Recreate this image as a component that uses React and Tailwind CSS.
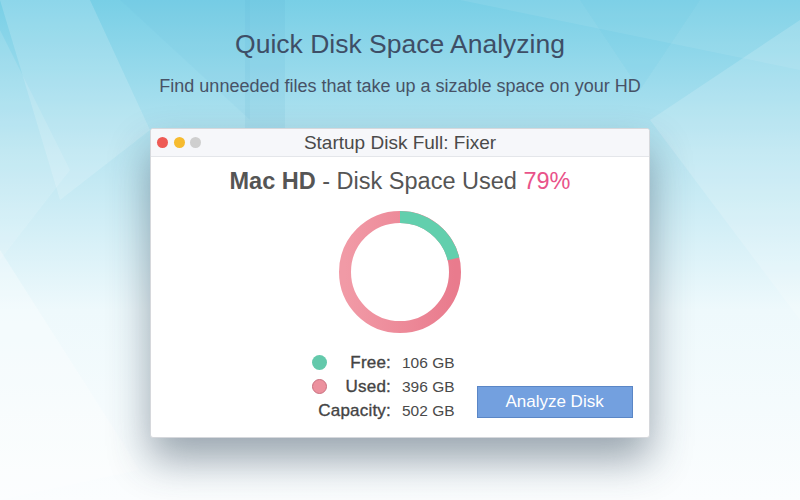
import React from 'react'

const FONT = { fontFamily: '"Liberation Sans", Arial, sans-serif' }

// donut geometry
const R = 55
const C = 2 * Math.PI * R
const FREE = 106 / 502

function Backdrop() {
  // faint triangular facets behind the page
  return (
    <svg className="absolute inset-0 w-full h-full" viewBox="0 0 800 500" preserveAspectRatio="none">
      <defs>
        <linearGradient id="bg" x1="0" y1="0" x2="0" y2="1">
          <stop offset="0" stopColor="#78cfe6" />
          <stop offset="0.3" stopColor="#b9e5f1" />
          <stop offset="0.62" stopColor="#eef9fc" />
          <stop offset="1" stopColor="#fbfdfe" />
        </linearGradient>
      </defs>
      <rect width="800" height="500" fill="url(#bg)" />
      <polygon points="0,0 90,0 150,130 60,200" fill="#ffffff" opacity="0.16" />
      <polygon points="0,30 0,260 70,170" fill="#ffffff" opacity="0.12" />
      <polygon points="245,0 285,0 285,260 245,200" fill="#4aa8cc" opacity="0.1" />
      <polygon points="120,0 250,0 250,120" fill="#5cb6d6" opacity="0.08" />
      <polygon points="0,250 140,470 0,500" fill="#ffffff" opacity="0.3" />
      <polygon points="460,0 800,0 800,70" fill="#ffffff" opacity="0.08" />
      <polygon points="650,120 800,20 800,320" fill="#ffffff" opacity="0.16" />
      <polygon points="580,0 700,0 640,90" fill="#5cc6e0" opacity="0.1" />
    </svg>
  )
}

function Donut() {
  return (
    <svg width="124" height="124" viewBox="0 0 124 124">
      <defs>
        {/* local y axis points right on screen after the -90° turn */}
        <linearGradient id="used" x1="0" y1="0" x2="0" y2="1">
          <stop offset="0" stopColor="#f19aa6" />
          <stop offset="1" stopColor="#e97b8d" />
        </linearGradient>
      </defs>
      <g transform="rotate(-90 62 62)">
        <circle cx="62" cy="62" r={R} fill="none" stroke="url(#used)" strokeWidth="12" />
        <circle
          cx="62" cy="62" r={R} fill="none" stroke="#62cfad" strokeWidth="12"
          strokeDasharray={`${C * FREE} ${C}`}
        />
      </g>
    </svg>
  )
}

export default function App() {
  const label = 'text-right text-[17px] leading-[21px] tracking-[0.2px] text-[#444] [-webkit-text-stroke:0.35px_#444]'
  const value = 'ml-[11px] text-[15.5px] leading-[21px]'

  return (
    <div className="relative w-[800px] h-[500px] overflow-hidden" style={FONT}>
      <Backdrop />

      <div className="relative flex flex-col items-center">
        <h1 className="mt-[29px] text-[26.5px] leading-[30px] text-[#3e4e66]">Quick Disk Space Analyzing</h1>
        <p className="mt-[16px] text-[18px] leading-[22px] text-[#475266]">
          Find unneeded files that take up a sizable space on your HD
        </p>

        {/* window */}
        <div className="mt-[31px] w-[500px] h-[310px] bg-white rounded-[3px] border border-[#d6d8dc] shadow-[0_22px_40px_rgba(40,60,80,0.45)] flex flex-col overflow-hidden">
          <div className="relative h-[28px] bg-[#f6f7fa] border-b border-[#e4e6ea] flex items-center justify-center">
            <div className="absolute left-[6px] top-[8px] flex gap-[5.5px]">
              <span className="w-[11px] h-[11px] rounded-full bg-[#ee5a55]" />
              <span className="w-[11px] h-[11px] rounded-full bg-[#f6bb2f]" />
              <span className="w-[11px] h-[11px] rounded-full bg-[#cfcfcf]" />
            </div>
            <span className="text-[19px] leading-[22px] text-[#4a4a4a]">Startup Disk Full: Fixer</span>
          </div>

          <div className="flex flex-col items-center">
            <div className="mt-[10px] text-[23.5px] leading-[28px] text-[#555]">
              <span className="font-bold">Mac HD</span> - Disk Space Used{' '}
              <span className="text-[#e9538a]">79%</span>
            </div>
            <div className="mt-[15px]">
              <Donut />
            </div>
          </div>

          <div className="mt-[18px] flex items-end">
            <div className="ml-[161px] grid grid-cols-[15px_64px_auto] gap-y-[3px] items-center text-[#4a4a4a]">
              <span className="w-[15px] h-[15px] rounded-full bg-[#63c9ab]" />
              <span className={label}>Free:</span>
              <span className={value}>106 GB</span>

              <span className="w-[15px] h-[15px] rounded-full bg-[#ec919e] border border-[#c9707f]" />
              <span className={label}>Used:</span>
              <span className={value}>396 GB</span>

              <span className={`col-span-2 ${label}`}>Capacity:</span>
              <span className={value}>502 GB</span>
            </div>
            <button className="ml-[22px] mb-[3px] w-[156px] h-[32px] bg-[#73a0df] border border-[#5a86c6] text-white text-[17px]">
              Analyze Disk
            </button>
          </div>
        </div>
      </div>
    </div>
  )
}
